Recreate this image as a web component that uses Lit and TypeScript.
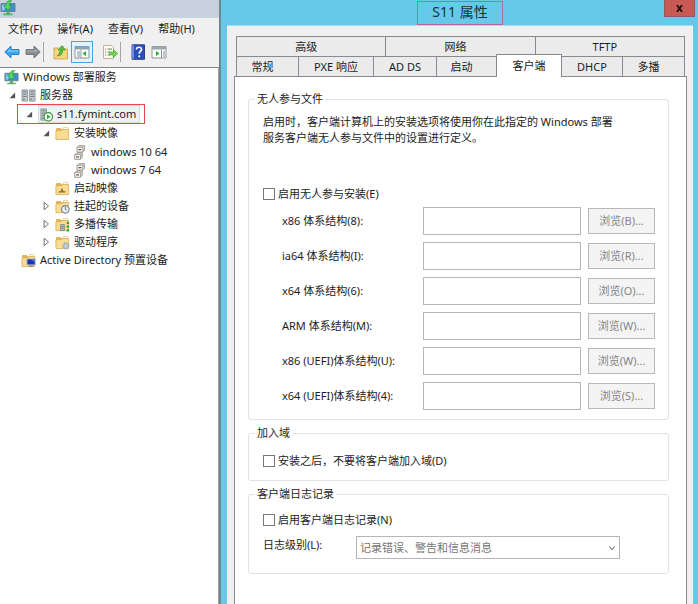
import { LitElement, html, css, svg, nothing, TemplateResult } from "lit";
import { customElement, property } from "lit/decorators.js";
import { classMap } from "lit/directives/class-map.js";

const folder = svg`
  <path d="M1 3.500 1.600 2H6l1 1.500h7V14H1z" fill="#e0b45c"/>
  <path d="M9 1.500h4.500V4H9z" fill="#fff" stroke="#d9b56a" stroke-width=".6"/>
  <path d="M1 5h6l1-1.300h6.500V14.500H1z" fill="#f8dc92" stroke="#d9ad55" stroke-width=".8"/>`;

const cabinet = (x: number, y: number) => svg`
  <path d="M${x} ${y + 2}l2-2h6v5l-2 2h-6z" fill="#d2cec4" stroke="#8b877e" stroke-width=".7"/>
  <path d="M${x} ${y + 2}h6v5h-6z" fill="#fbfaf6" stroke="#8b877e" stroke-width=".7"/>
  <path d="M${x + 1.5} ${y + 4.5}h3" stroke="#4d4a45" stroke-width="1.300"/>`;

const tower = (x: number) => svg`
  <path d="M${x} 2h6v12h-6z" fill="#c5cbd0" stroke="#7e868d" stroke-width=".8"/>
  <path d="M${x + 1} 4h4M${x + 1} 6.500h4M${x + 1} 9h4" stroke="#5d666e" stroke-width=".9"/>
  <path d="M${x + 1} 12h2" stroke="#3aa63a" stroke-width="1.400"/>`;

const icons: Record<string, TemplateResult | ReturnType<typeof svg>> = {
  deploy: svg`
    <path d="M1 3.500h14V11.500H1z" fill="#3b8fd0" stroke="#6c7f90" stroke-width="1"/>
    <path d="M2 4.500h5L4 10.500H2z" fill="#8cc8f0"/>
    <path d="M6.500 11.500h3v2h-3zM3.500 13.500h9v1.800h-9z" fill="#55b05f"/>
    <path d="M11.500.500C8 .300 5.800 2 5.800 5.500H3.500L8 10.500 12 5.500H9.300c0-2 .7-3.500 2.200-5z" fill="#52d862" stroke="#259a3c" stroke-width=".7"/>`,
  servers: svg`${tower(1)}${tower(9)}`,
  server: svg`${tower(3)}
    <circle cx="11" cy="10.500" r="4.500" fill="#fff" stroke="#35943b" stroke-width="1.200"/>
    <path d="M9.500 8v5l4-2.500z" fill="#2ea836"/>`,
  folder,
  cabinets: svg`${cabinet(5.5, 0.5)}${cabinet(3, 8.2)}`,
  boot: svg`${folder}<path d="M4 11.500h7M7.500 8v3" stroke="#8c6420" stroke-width="1.300"/><path d="M5.500 11 7.500 8.500 9.500 11z" fill="#a67828"/>`,
  pending: svg`${folder}
    <circle cx="11" cy="11" r="4" fill="#eef4f8" stroke="#71838f" stroke-width="1.200"/>
    <path d="M11 8.500V11l1.500 1" stroke="#35576d" fill="none" stroke-width=".9"/>`,
  multicast: svg`${folder}
    <path d="M6 8h4v6.500H6z" fill="#b9c0c6" stroke="#68727b" stroke-width=".7"/>
    <path d="M7 10h2M7 12h2" stroke="#4b555d" stroke-width=".7"/>
    <path d="M12.500 5H15v2.500h-2.500zM12.500 9H15v2.500h-2.500zM12.500 13H15v2.500h-2.500z" fill="#20ad34"/>`,
  drivers: svg`${folder}
    <circle cx="11.500" cy="11.500" r="3" fill="#e7eef2" stroke="#8aa0ae" stroke-width="1.600" stroke-dasharray="1.400 .9"/>
    <circle cx="11.500" cy="11.500" r="1.500" fill="#fff" stroke="#6f8796" stroke-width=".8"/>`,
  prestaged: svg`${folder}
    <path d="M6.500 6.500H15V12.500H6.500z" fill="#1835b8" stroke="#8d98ad" stroke-width=".9"/>
    <path d="M10.500 7h4v2.500z" fill="#5f83ee"/><path d="M9 13h4v2H8z" fill="#8994a2"/>`,
  back: svg`<path d="M.8 8 7 2v3.500h8v5H7V14z" fill="#3aa5ec" stroke="#2378bd" stroke-width=".9"/><path d="M3 7.700 6.300 4.500v2H14v1.200z" fill="#82cdfa"/>`,
  forward: svg`<path d="M15.200 8 9 2v3.500H1v5h8V14z" fill="#8b8e91" stroke="#6c6f72" stroke-width=".9"/><path d="M13 7.700 9.700 4.500v2H2v1.200z" fill="#a9acae"/>`,
  up: svg`
    <path d="M1 4h5l1 1h7.500v10H1z" fill="#f5d67e" stroke="#cda044" stroke-width=".8"/>
    <path d="M4 12c1.500-.8 3-3 3-6H5L9 1.500 12.500 6H9.700c0 4-2 6-5.700 6z" fill="#57bb3f" stroke="#37922a" stroke-width=".6"/>`,
  tree: svg`
    <path d="M1 2.500h14v11.500H1z" fill="#fff" stroke="#8795a2"/>
    <path d="M1 2.500h14v3H1z" fill="#93a3b0"/>
    <path d="M3 8h3M3 10h3M3 12h3" stroke="#7d8a95"/><path d="M7 5.500V14" stroke="#8795a2"/>
    <path d="M12 7v5L8.500 9.500z" fill="#2fac35"/>`,
  export: svg`
    <path d="M1.500 1.500h8l2 2v11h-10z" fill="#fffdf0" stroke="#b3ac8d" stroke-width=".9"/>
    <path d="M3 5h1M5.500 5H10M3 8h1M5.500 8H8M3 11h1M5.500 11H8" stroke="#77756a"/>
    <path d="M7.500 8h4V5.500L15.700 9.500l-4.200 4V11h-4z" fill="#72d64d" stroke="#42a52d" stroke-width=".6"/>`,
  help: svg`
    <path d="M2 .8h12.500v14.500H2z" fill="#2b50bd" stroke="#1c3486" stroke-width=".9"/><path d="M2 1h2v14H2z" fill="#6c8be0"/>
    <path d="M6.500 5.500c0-3 5-3 5 0 0 2-2.300 2-2.300 4.300" fill="none" stroke="#fff" stroke-width="1.700"/>
    <circle cx="9.200" cy="12.300" r="1.100" fill="#fff"/>`,
  pane: svg`
    <path d="M1 2.500h14v11.500H1z" fill="#fff" stroke="#8d949a"/>
    <path d="M1 2.500h14v3H1z" fill="#a0a7ad"/>
    <path d="M10.500 5.500V14" stroke="#8d949a"/><path d="M12 8h2M12 10h2M12 12h2" stroke="#7d8a95"/>
    <path d="M5 7v5l3.500-2.500z" fill="#2fac35"/>`,
  open: svg`<path d="M13 4v9H4z" fill="#555"/>`,
  closed: svg`<path d="M5 2v12L12 8z" fill="#fff" stroke="#666" stroke-width="1.500"/>`,
  chevron: svg`<path d="M3.500 5.500 8 10.500l4.500-5" fill="none" stroke="#8a8a8a" stroke-width="2"/>`,
  close: svg`<path d="M3 3h3l2 3 2-3h3L9.700 8l3.300 5h-3L8 10l-2 3H3l3.300-5z" fill="#1d1010"/>`,
};

const icon = (name: string) =>
  html`<svg class="icon" viewBox="0 0 16 16" aria-hidden="true">${icons[name]}</svg>`;

interface Node {
  label: string;
  icon: string;
  state?: "open" | "closed";
  selected?: boolean;
  children?: Node[];
}

const root: Node = {
  label: "Windows 部署服务",
  icon: "deploy",
  children: [
    {
      label: "服务器",
      icon: "servers",
      state: "open",
      children: [
        {
          label: "s11.fymint.com",
          icon: "server",
          state: "open",
          selected: true,
          children: [
            {
              label: "安装映像",
              icon: "folder",
              state: "open",
              children: [
                { label: "windows 10 64", icon: "cabinets" },
                { label: "windows 7 64", icon: "cabinets" },
              ],
            },
            { label: "启动映像", icon: "boot" },
            { label: "挂起的设备", icon: "pending", state: "closed" },
            { label: "多播传输", icon: "multicast", state: "closed" },
            { label: "驱动程序", icon: "drivers", state: "closed" },
          ],
        },
      ],
    },
    { label: "Active Directory 预置设备", icon: "prestaged" },
  ],
};

const base = css`
  * { box-sizing: border-box; }
  button, input, select { font: inherit; color: inherit; margin: 0; }
  button { padding: 0; border: 0; background: none; }
  .icon { display: block; width: 16px; height: 16px; flex: none; }
`;

@customElement("console-tree")
class ConsoleTree extends LitElement {
  static styles = [
    base,
    css`
      :host { display: block; }
      ul { list-style: none; margin: 0; padding: 1px 0 0 17px; }
      .root { padding: 0 0 0 4px; }
      .root > li > ul { padding: 0 0 0 3px; }
      .row { display: flex; align-items: center; height: 18px; white-space: nowrap; }
      .twisty { width: 14px; flex: none; }
      .twisty .icon { width: 10px; height: 10px; }
      .item { display: flex; align-items: center; gap: 4px; height: 18px; line-height: 18px; }
      .item .icon { width: 15px; height: 15px; }
      .selected { position: relative; background: #f0f0f0; outline: 1px solid #dadada; outline-offset: -1px; padding-right: 4px; }
      .selected::after { content: ""; position: absolute; inset: -1px -5px -1px -21px; border: 1px solid #e04a4a; }
    `,
  ];

  private node(n: Node, top = false): TemplateResult {
    return html`<li role="treeitem" aria-selected=${n.selected ? "true" : "false"}>
      <div class="row">
        ${top ? nothing : html`<span class="twisty">${n.state ? icon(n.state) : nothing}</span>`}
        <span class=${classMap({ item: true, selected: !!n.selected })}>${icon(n.icon)}<span>${n.label}</span></span>
      </div>
      ${n.children ? html`<ul role="group">${n.children.map((c) => this.node(c))}</ul>` : nothing}
    </li>`;
  }

  render() {
    return html`<ul class="root" role="tree">${this.node(root, true)}</ul>`;
  }
}

@customElement("console-window")
class ConsoleWindow extends LitElement {
  static styles = [
    base,
    css`
      :host { display: flex; flex-direction: column; background: #f0f0f0; border-right: 2px solid #71868f; }
      .title { height: 18px; background: #c8d1de; }
      .menu { display: flex; gap: 15px; height: 22px; padding: 0 8px; }
      .menu button { line-height: 22px; white-space: nowrap; }
      .tools { display: flex; align-items: center; height: 27px; padding: 0 0 4px 1px; }
      .tools button { display: grid; place-items: center; width: 21px; height: 22px; }
      .tools .active { width: 22px; background: #e2f1fb; border: 1px solid #4aa5dc; }
      .sep { width: 1px; height: 20px; margin: 0 6px 0 0; background: #a5a5a5; }
      .gap { margin-left: 6px; }
      .body { flex: 1; background: #fff; border-top: 1px solid #858585; border-right: 1px solid #a0a0a0; }
    `,
  ];

  render() {
    const tool = (name: string, label: string, cls = "") =>
      html`<button class=${cls} aria-label=${label}>${icon(name)}</button>`;
    return html`
      <div class="title">${icon("deploy")}</div>
      <nav class="menu">
        ${["文件(F)", "操作(A)", "查看(V)", "帮助(H)"].map((m) => html`<button>${m}</button>`)}
      </nav>
      <div class="tools">
        ${tool("back", "后退")}${tool("forward", "前进")}<span class="sep"></span>
        ${tool("up", "向上")}${tool("tree", "控制台树", "active")}${tool("export", "导出列表", "gap")}<span class="sep"></span>
        ${tool("help", "帮助")}${tool("pane", "操作窗格")}
      </div>
      <div class="body"><console-tree></console-tree></div>
    `;
  }
}

@customElement("properties-dialog")
class PropertiesDialog extends LitElement {
  static styles = [
    base,
    css`
      :host { display: flex; flex-direction: column; padding: 0 5px 0 6px; background: #67c9ea; }
      .title { position: relative; display: flex; justify-content: center; height: 25px; padding-top: 1px; }
      h1 { margin: 0; padding: 0 14px; border: 1px solid #a7748c; font-size: 14px; font-weight: 400; line-height: 20px; color: #12333f; }
      .close { position: absolute; top: 0; right: -2px; display: grid; place-items: center; width: 31px; height: 17px; background: #c75a55; border: 1px solid #8d5a62; border-top: 0; }
      .close .icon { width: 11px; height: 11px; }
      .client { flex: 1; display: flex; flex-direction: column; padding: 10px 6px 0 7px; background: #f0f0f0; border-top: 1px solid #a9dcee; }
      .tabs { display: grid; grid-template-columns: repeat(3, minmax(0, 1fr)); height: 20px; margin: 0 2px; border-left: 1px solid #868a92; }
      .narrow { grid-template-columns: 62fr 75fr 63fr 60fr 65fr 61fr 62fr; }
      .tab { height: 20px; border: 1px solid #868a92; border-width: 1px 1px 0 0; background: #ebebeb; line-height: 18px; white-space: nowrap; }
      .lead { padding-right: 10px; }
      .narrow .active { position: relative; height: 23px; margin: -2px 0 -1px -1px; border-left-width: 1px; background: #fff; }
      .page { flex: 1; display: flex; flex-direction: column; gap: 4px; padding: 13px 17px 30px 13px; background: #fff; border: 1px solid #868a92; border-width: 1px 1px 0; }
      fieldset { min-width: 0; margin: 0; border: 1px solid #dce4ea; border-radius: 3px; }
      legend { margin-left: -8px; padding: 0 2px; line-height: 18px; }
      .install { padding: 6px 13px 9px 14px; }
      .join { padding: 11px 13px 11px 14px; }
      .log { padding: 9px 13px 14px 14px; }
      p { max-width: 360px; margin: 0 0 40px; line-height: 16px; }
      .check { display: flex; align-items: center; gap: 3px; height: 16px; line-height: 16px; }
      .check input { appearance: none; width: 12px; height: 12px; border: 1px solid #777; background: #fff; }
      .fields { display: grid; gap: 7px; padding: 5px 0 0 19px; }
      .field { display: grid; grid-template-columns: minmax(0, 141fr) minmax(0, 158fr) 74px; align-items: center; height: 28px; }
      .field input { width: 100%; height: 28px; padding: 0 4px; border: 1px solid #b4b7b9; background: #fff; }
      .field button { justify-self: end; width: 67px; height: 26px; border: 1px solid #b4b9bb; background: #f4f4f4; color: #858585; }
      .level { display: grid; grid-template-columns: 93px minmax(0, 264px); margin-top: 8px; }
      .level label { line-height: 18px; }
      .select { position: relative; }
      select { appearance: none; width: 100%; height: 23px; padding: 0 20px 0 3px; border: 1px solid #b4b7b9; border-radius: 0; background: #fff; color: #757575; opacity: 1; }
      .select .icon { position: absolute; right: 3px; top: 7px; width: 10px; height: 10px; pointer-events: none; }
    `,
  ];

  @property({ attribute: false }) fields = [
    ["x86 体系结构(8):", "浏览(B)..."],
    ["ia64 体系结构(I):", "浏览(R)..."],
    ["x64 体系结构(6):", "浏览(O)..."],
    ["ARM 体系结构(M):", "浏览(W)..."],
    ["x86 (UEFI)体系结构(U):", "浏览(W)..."],
    ["x64 (UEFI)体系结构(4):", "浏览(S)..."],
  ];

  private tab(label: string, cls = "") {
    return html`<button class="tab ${cls}" role="tab" aria-selected=${cls === "active" ? "true" : "false"}>${label}</button>`;
  }

  render() {
    return html`
      <header class="title">
        <h1>S11 属性</h1>
        <button class="close" aria-label="关闭">${icon("close")}</button>
      </header>
      <div class="client">
        <div class="tabs" role="tablist">
          ${this.tab("高级", "lead")}${this.tab("网络", "lead")}${this.tab("TFTP", "lead")}
        </div>
        <div class="tabs narrow" role="tablist">
          ${this.tab("常规", "lead")}${this.tab("PXE 响应")}${this.tab("AD DS")}${this.tab("启动", "lead")}
          ${this.tab("客户端", "active")}${this.tab("DHCP")}${this.tab("多播", "lead")}
        </div>
        <div class="page" role="tabpanel">
          <fieldset class="install">
            <legend>无人参与文件</legend>
            <p>启用时，客户端计算机上的安装选项将使用你在此指定的 Windows 部署服务客户端无人参与文件中的设置进行定义。</p>
            <label class="check"><input type="checkbox" />启用无人参与安装(E)</label>
            <div class="fields">
              ${this.fields.map(
                ([label, browse], i) => html`<div class="field">
                  <label for="path-${i}">${label}</label>
                  <input id="path-${i}" type="text" disabled />
                  <button disabled>${browse}</button>
                </div>`
              )}
            </div>
          </fieldset>
          <fieldset class="join">
            <legend>加入域</legend>
            <label class="check"><input type="checkbox" />安装之后，不要将客户端加入域(D)</label>
          </fieldset>
          <fieldset class="log">
            <legend>客户端日志记录</legend>
            <label class="check"><input type="checkbox" />启用客户端日志记录(N)</label>
            <div class="level">
              <label for="level">日志级别(L):</label>
              <div class="select">
                <select id="level" disabled><option>记录错误、警告和信息消息</option></select>
                ${icon("chevron")}
              </div>
            </div>
          </fieldset>
        </div>
      </div>
    `;
  }
}

@customElement("app-root")
class AppRoot extends LitElement {
  static styles = css`
    :host {
      display: grid;
      grid-template-columns: minmax(0, 221fr) minmax(0, 477fr);
      min-height: 100vh;
      font: 11px/16px "Noto Sans", "Noto Sans CJK SC", sans-serif;
      color: #1c1c1c;
    }
  `;

  render() {
    return html`<console-window></console-window><properties-dialog></properties-dialog>`;
  }
}
